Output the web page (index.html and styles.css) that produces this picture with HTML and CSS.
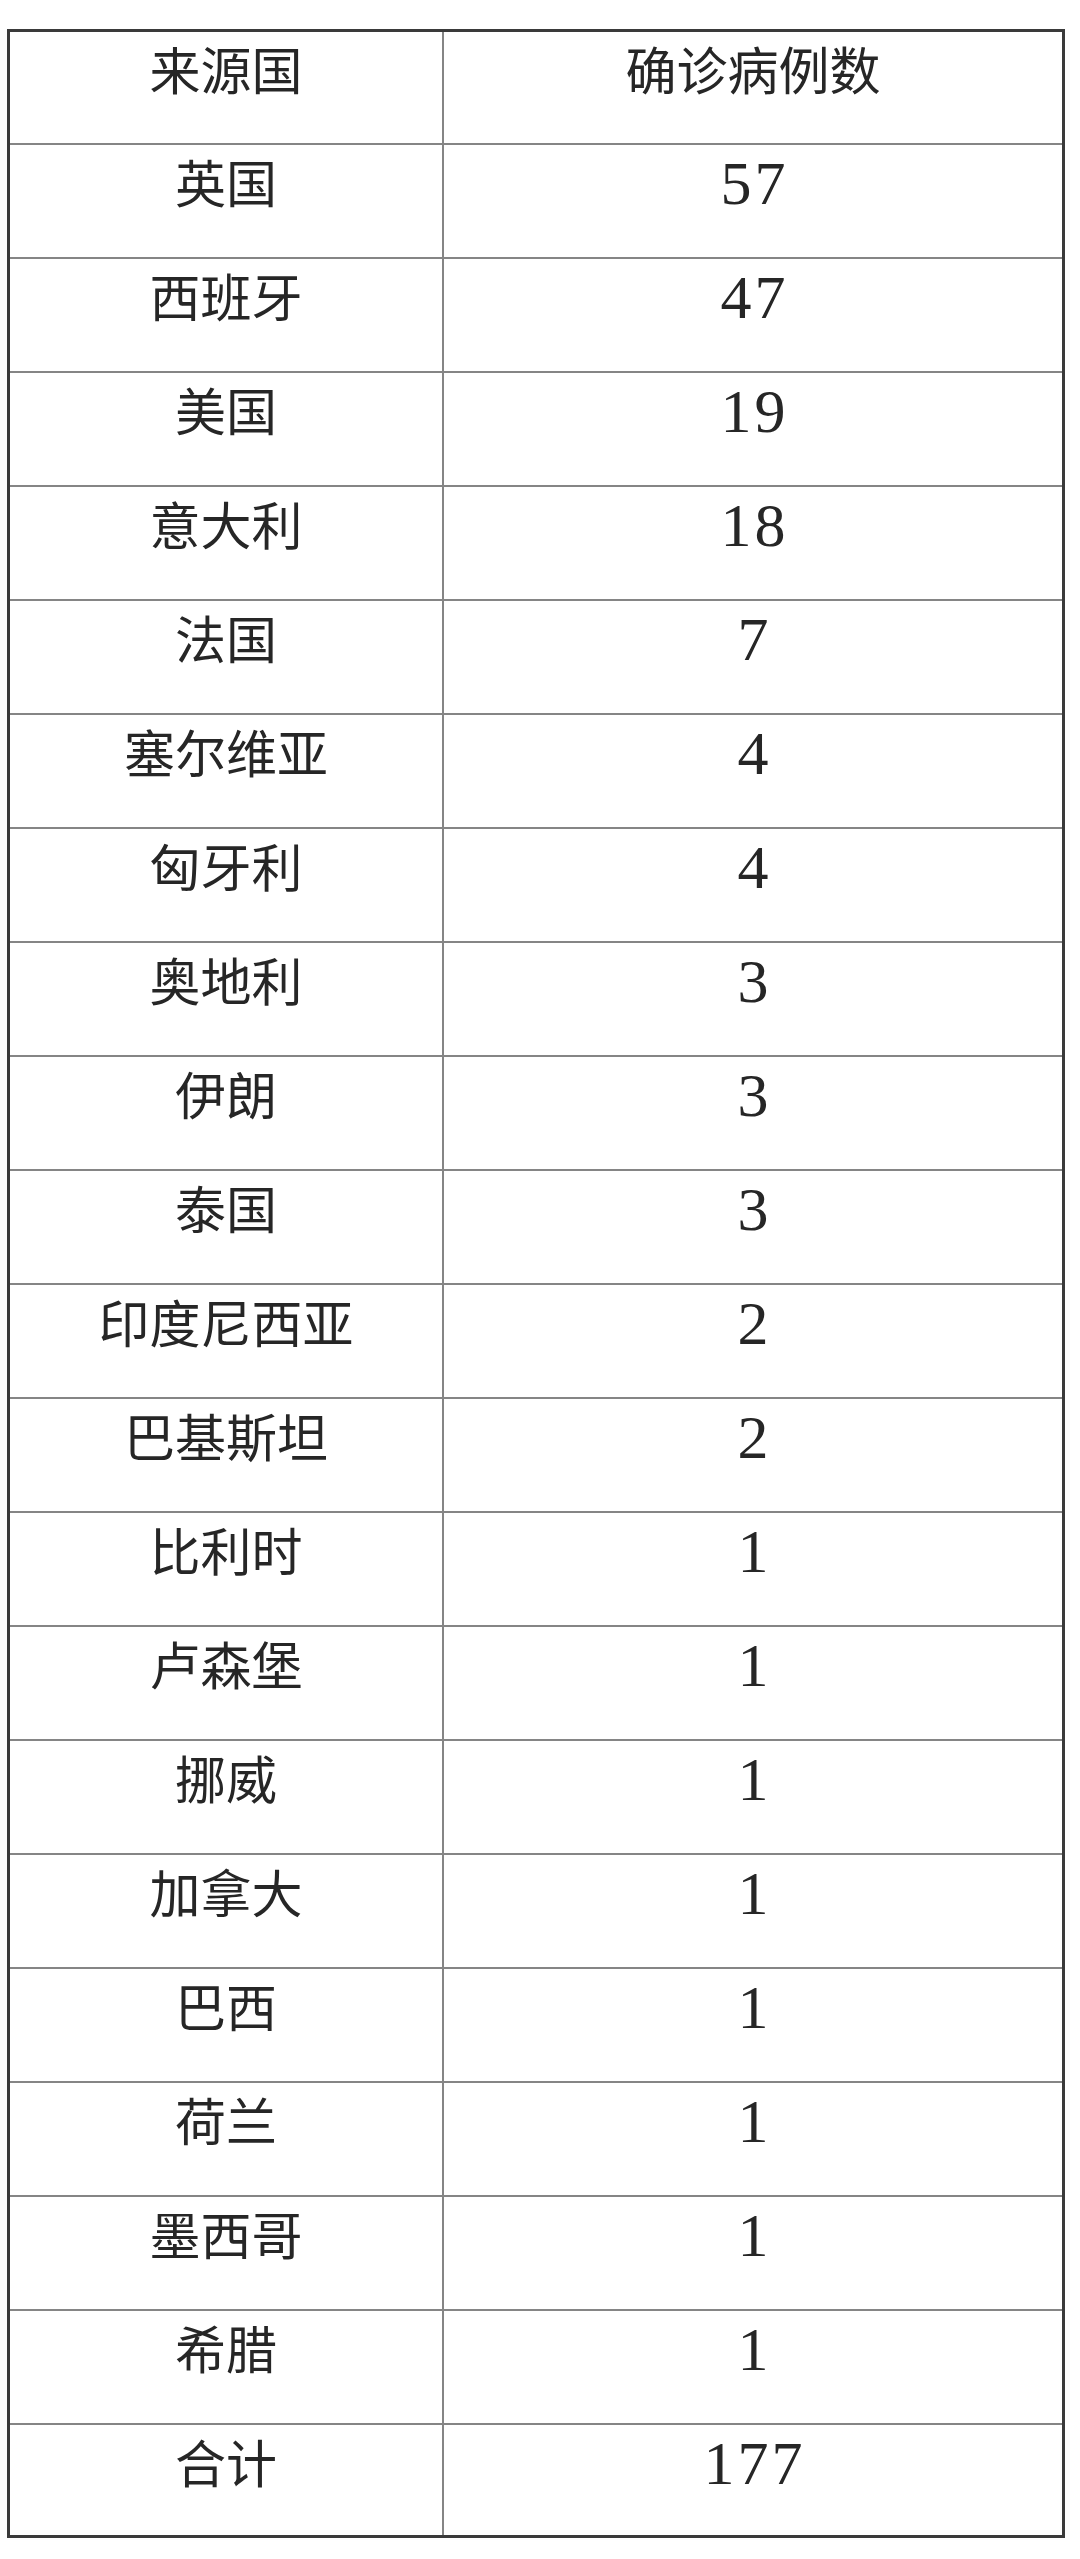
FILE: index.html
```html
<!DOCTYPE html>
<html lang="zh-CN">
<head>
<meta charset="utf-8">
<title>来源国确诊病例数</title>
<link rel="stylesheet" href="styles.css">
</head>
<body>
<div class="table">
  <div class="cell name first">来源国</div><div class="cell head first">确诊病例数</div>
  <div class="cell name">英国</div><div class="cell num">57</div>
  <div class="cell name">西班牙</div><div class="cell num">47</div>
  <div class="cell name">美国</div><div class="cell num">19</div>
  <div class="cell name">意大利</div><div class="cell num">18</div>
  <div class="cell name">法国</div><div class="cell num">7</div>
  <div class="cell name">塞尔维亚</div><div class="cell num">4</div>
  <div class="cell name">匈牙利</div><div class="cell num">4</div>
  <div class="cell name">奥地利</div><div class="cell num">3</div>
  <div class="cell name">伊朗</div><div class="cell num">3</div>
  <div class="cell name">泰国</div><div class="cell num">3</div>
  <div class="cell name">印度尼西亚</div><div class="cell num">2</div>
  <div class="cell name">巴基斯坦</div><div class="cell num">2</div>
  <div class="cell name">比利时</div><div class="cell num">1</div>
  <div class="cell name">卢森堡</div><div class="cell num">1</div>
  <div class="cell name">挪威</div><div class="cell num">1</div>
  <div class="cell name">加拿大</div><div class="cell num">1</div>
  <div class="cell name">巴西</div><div class="cell num">1</div>
  <div class="cell name">荷兰</div><div class="cell num">1</div>
  <div class="cell name">墨西哥</div><div class="cell num">1</div>
  <div class="cell name">希腊</div><div class="cell num">1</div>
  <div class="cell name last">合计</div><div class="cell num last">177</div>
</div>
</body>
</html>
```
FILE: styles.css
```css
html, body {
  margin: 0;
  padding: 0;
  background: #ffffff;
}

body {
  padding-top: 29px;
  padding-left: 7px;
}

.table {
  width: 1058px;
  box-sizing: border-box;
  border: 3px solid #3a3a3a;
  display: grid;
  grid-template-columns: 434px 1fr;
}

.cell {
  height: 114px;
  box-sizing: border-box;
  border-bottom: 2px solid #858585;
  text-align: center;
  color: #262626;
}

.cell.first {
  height: 113px;
}

.cell.last {
  border-bottom: none;
  height: 110px;
}

.name, .head {
  font-family: "Noto Sans CJK SC", "Noto Sans", sans-serif;
  font-size: 51px;
  font-weight: 400;
  line-height: 72px;
}

.name {
  border-right: 2px solid #858585;
}

.num {
  font-family: "Liberation Serif", "DejaVu Serif", serif;
  font-size: 62px;
  line-height: 76px;
  letter-spacing: 3px;
  text-indent: 3px;
}
```
